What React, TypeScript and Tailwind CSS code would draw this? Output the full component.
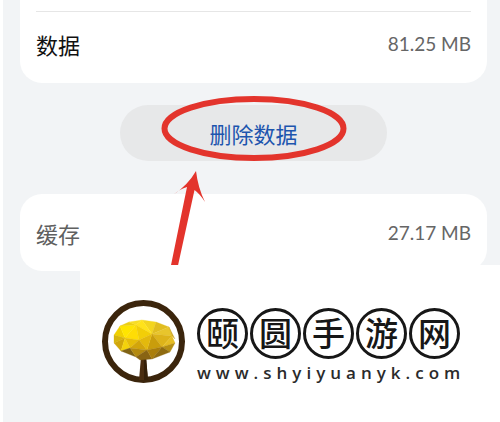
import React from "react";

const brand = ["颐", "圆", "手", "游", "网"];

function StorageRow({ label, value, strong }: { label: string; value: string; strong?: boolean }) {
  return (
    <div className="flex items-center justify-between">
      <dt
        className={
          strong
            ? "text-[22px] leading-8 text-[#111111]"
            : "text-[22px] leading-8 text-[#606060]"
        }
      >
        {label}
      </dt>
      <dd className="font-['Lato','Noto_Sans_CJK_SC',sans-serif] text-[19px] leading-8 text-[#666666]">
        {value}
      </dd>
    </div>
  );
}

function Annotation() {
  return (
    <svg
      className="pointer-events-none absolute top-0 left-1/2 -mt-3 -ml-[134px] overflow-visible"
      width="267"
      height="176"
      viewBox="120 93 267 176"
      aria-hidden="true"
    >
      <ellipse cx="254" cy="128.500" rx="89.500" ry="29.500" fill="none" stroke="#e3342c" strokeWidth="6" />
      <path
        d="M196 171 Q198 188 205 202 Q200 194 194.500 190 L177 270 L170 270 L187 187 Q180 189 173 195 Q188 185 196 171Z"
        fill="#e3342c"
      />
    </svg>
  );
}

function TreeLogo() {
  return (
    <svg className="size-[83px] shrink-0" viewBox="0 0 83 83" role="img" aria-label="颐圆手游网">
      <circle cx="41.500" cy="41.500" r="38.500" fill="#fff" stroke="#3b250c" strokeWidth="6" />
      <path d="M39 57H44L46 80H37Z" fill="#4a2d10" />
      <path d="M42 57H44L46 80H42Z" fill="#352009" />
      <g strokeWidth="0.3" strokeLinejoin="round">
        <path d="M12 35L18 26L23 38Z" fill="#f0d000" stroke="#f0d000" />
        <path d="M18 26L34 25L23 38Z" fill="#ffe500" stroke="#ffe500" />
        <path d="M18 26L27 22L34 25Z" fill="#edcf12" stroke="#edcf12" />
        <path d="M27 22L40 20L34 25Z" fill="#f8dd25" stroke="#f8dd25" />
        <path d="M40 20L54 22L50 34Z" fill="#f3d51f" stroke="#f3d51f" />
        <path d="M34 25L40 20L50 34Z" fill="#ffe21a" stroke="#ffe21a" />
        <path d="M34 25L37 40L23 38Z" fill="#ffdd05" stroke="#ffdd05" />
        <path d="M34 25L50 34L37 40Z" fill="#f2ce08" stroke="#f2ce08" />
        <path d="M54 22L67 27L50 34Z" fill="#e1bd20" stroke="#e1bd20" />
        <path d="M67 27L70 36L50 34Z" fill="#e8c52c" stroke="#e8c52c" />
        <path d="M67 27L73 39L70 36Z" fill="#cda31c" stroke="#cda31c" />
        <path d="M50 34L70 36L60 47Z" fill="#ddb31a" stroke="#ddb31a" />
        <path d="M70 36L73 43L60 47Z" fill="#e6bd23" stroke="#e6bd23" />
        <path d="M73 43L68 52L60 47Z" fill="#b68f13" stroke="#b68f13" />
        <path d="M50 34L60 47L45 50Z" fill="#c99d0c" stroke="#c99d0c" />
        <path d="M50 34L45 50L37 40Z" fill="#e3b90d" stroke="#e3b90d" />
        <path d="M12 35L23 38L12 43Z" fill="#d7b50d" stroke="#d7b50d" />
        <path d="M12 43L23 38L19 51Z" fill="#d1a70b" stroke="#d1a70b" />
        <path d="M23 38L28 48L19 51Z" fill="#f4d20b" stroke="#f4d20b" />
        <path d="M23 38L37 40L28 48Z" fill="#e6bd09" stroke="#e6bd09" />
        <path d="M37 40L45 50L28 48Z" fill="#d2a50b" stroke="#d2a50b" />
        <path d="M19 51L28 48L34 57Z" fill="#806315" stroke="#806315" />
        <path d="M28 48L45 50L34 57Z" fill="#b48a10" stroke="#b48a10" />
        <path d="M34 57L45 50L50 59L38 60Z" fill="#896413" stroke="#896413" />
        <path d="M45 50L60 47L50 59Z" fill="#aa7e0b" stroke="#aa7e0b" />
        <path d="M60 47L68 52L50 59Z" fill="#8f6b10" stroke="#8f6b10" />
      </g>
    </svg>
  );
}

function Watermark() {
  return (
    <footer className="absolute top-[265px] right-0 bottom-0 left-[77px] flex items-start bg-white pt-[35px] pl-[22px]">
      <TreeLogo />
      <div className="mt-2 ml-3">
        <div className="flex gap-0.5">
          {brand.map((character) => (
            <span
              key={character}
              className="flex size-[51px] items-center justify-center rounded-full border-3 border-[#171717] pb-0.5 text-[33px] leading-none font-medium text-[#171717]"
            >
              {character}
            </span>
          ))}
        </div>
        <a
          href="#home"
          className="block font-['Open_Sans','Noto_Sans',sans-serif] text-[17px] leading-7 font-semibold tracking-[5px] text-[#2b2b2b]"
        >
          www.shyiyuanyk.com
        </a>
      </div>
    </footer>
  );
}

export default function App() {
  return (
    <div className="relative min-h-screen overflow-hidden border-l-[3px] border-white bg-[#f2f4f6] font-['Noto_Sans_CJK_SC',sans-serif]">
      <main className="pr-[13px] pl-[17px]">
        <dl className="rounded-b-[22px] bg-white px-4 pt-[11px] pb-[23px]">
          <div className="border-t border-[#e6e6e6] pt-4">
            <StorageRow label="数据" value="81.25 MB" strong />
          </div>
        </dl>
        <div className="relative mt-[22px] mb-[33px] flex justify-center">
          <button
            type="button"
            className="h-14 w-4/7 rounded-full bg-[#e7e8e9] text-[22px] leading-8 text-[#1d55ae]"
          >
            删除数据
          </button>
          <Annotation />
        </div>
        <dl className="rounded-[22px] bg-white px-4 pt-[23px] pb-[22px]">
          <StorageRow label="缓存" value="27.17 MB" />
        </dl>
      </main>
      <Watermark />
    </div>
  );
}
